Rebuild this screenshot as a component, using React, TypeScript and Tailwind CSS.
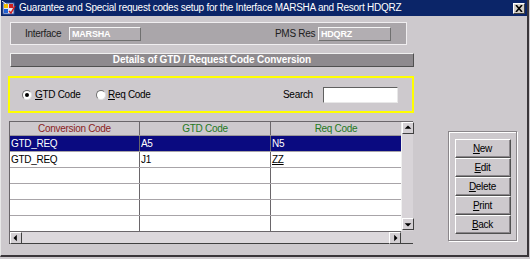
import React from 'react';

const font = "font-['Liberation_Sans',Arial,sans-serif]";

const rows = [
  { conv: 'GTD_REQ', gtd: 'A5', req: 'N5', selected: true },
  { conv: 'GTD_REQ', gtd: 'J1', req: 'ZZ', selected: false },
  { conv: '', gtd: '', req: '', selected: false },
  { conv: '', gtd: '', req: '', selected: false },
  { conv: '', gtd: '', req: '', selected: false },
  { conv: '', gtd: '', req: '', selected: false },
];

const Mnemonic: React.FC<{ text: string }> = ({ text }) => (
  <span className="whitespace-nowrap">
    <span className="underline">{text[0]}</span>
    {text.slice(1)}
  </span>
);

const Arrow: React.FC<{ dir: 'up' | 'down' | 'left' | 'right' }> = ({ dir }) => {
  const pts = {
    up: '2,7 6,3 10,7',
    down: '2,5 6,9 10,5',
    left: '7,2 3,6 7,10',
    right: '5,2 9,6 5,10',
  }[dir];
  return (
    <div className="w-[12px] h-[12px] bg-[#d4d0d4] border border-t-white border-l-white border-r-[#404040] border-b-[#404040] flex items-center justify-center">
      <svg width="10" height="10" viewBox="0 0 12 12">
        <polygon points={pts} fill="#000" />
      </svg>
    </div>
  );
};

const WinIcon = () => (
  <svg width="14" height="14" viewBox="0 0 14 14">
    <rect x="1" y="2" width="11" height="11" fill="#e8e8f0" stroke="#3050a0" strokeWidth="1" />
    <rect x="2" y="3" width="4" height="4" fill="#f0c000" />
    <rect x="7" y="3" width="4" height="4" fill="#d02020" />
    <rect x="2" y="8" width="4" height="4" fill="#2060d0" />
    <path d="M7 10 L9 12 L13 5" stroke="#d02020" strokeWidth="1.5" fill="none" />
    <path d="M0 0 L4 3" stroke="#ffffff" strokeWidth="1" />
  </svg>
);

export default function App() {
  return (
    <div className={`w-[530px] h-[259px] bg-[#cdc9cd] ${font} text-[10px] tracking-[-0.3px] text-black overflow-hidden`}>
      <div className="w-[529px] h-[257px] flex flex-col border-r-2 border-b-2 border-[#3a363a] border-l border-l-[#e8e8e8]">
        {/* title bar */}
        <div className="h-[16px] bg-[#0b2568] flex items-center pl-[1px] pr-[2px]">
          <WinIcon />
          <span className="ml-[3px] text-white text-[10px] tracking-[-0.25px] leading-none whitespace-nowrap">
            Guarantee and Special request codes setup for the Interface MARSHA and Resort HDQRZ
          </span>
          <div className="ml-auto w-[12px] h-[11px] bg-[#d4d0c8] border border-t-white border-l-white border-r-[#404040] border-b-[#404040] flex items-center justify-center">
            <svg width="8" height="7" viewBox="0 0 8 7">
              <path d="M1 0 L7 7 M7 0 L1 7" stroke="#000" strokeWidth="1.6" />
            </svg>
          </div>
        </div>

        {/* interface panel */}
        <div className="mt-[6px] ml-[9px] w-[397px] h-[23px] bg-[#aaa6aa] border border-[#f0eef0] flex items-center">
          <span className="ml-[14px] w-[44px] text-[#202020] whitespace-nowrap">Interface</span>
          <div className="w-[72px] h-[14px] bg-[#b2aeb2] border border-t-[#f4f4f4] border-l-[#f4f4f4] border-r-[#707070] border-b-[#707070] text-white font-bold text-[9px] tracking-[-0.2px] leading-[12px] pl-[2px]">
            MARSHA
          </div>
          <span className="ml-[134px] w-[43px] text-[#202020] whitespace-nowrap">PMS Res</span>
          <div className="w-[73px] h-[14px] bg-[#b2aeb2] border border-t-[#f4f4f4] border-l-[#f4f4f4] border-r-[#707070] border-b-[#707070] text-white font-bold text-[9px] tracking-[-0.2px] leading-[12px] pl-[2px]">
            HDQRZ
          </div>
        </div>

        {/* details header */}
        <div className="mt-[8px] ml-[9px] w-[404px] h-[14px] bg-[#8e8a8e] border border-t-[#f0f0f0] border-l-[#f0f0f0] border-r-[#505050] border-b-[#505050] text-white font-bold text-[10px] tracking-[-0.1px] leading-[12px] text-center whitespace-nowrap">
          Details of GTD / Request Code Conversion
        </div>

        {/* filter box */}
        <div className="mt-[9px] ml-[7px] w-[406px] h-[37px] border-2 border-[#ffff00] flex items-center">
          <div className="ml-[12px] w-[74px] flex items-center">
            <div className="w-[10px] h-[10px] rounded-full bg-white border border-t-[#707070] border-l-[#707070] border-r-[#e0e0e0] border-b-[#e0e0e0] flex items-center justify-center">
              <div className="w-[4px] h-[4px] rounded-full bg-black" />
            </div>
            <span className="ml-[3px]"><Mnemonic text="GTD Code" /></span>
          </div>
          <div className="w-[187px] flex items-center">
            <div className="w-[10px] h-[10px] rounded-full bg-white border border-t-[#707070] border-l-[#707070] border-r-[#e0e0e0] border-b-[#e0e0e0]" />
            <span className="ml-[2px]"><Mnemonic text="Req Code" /></span>
          </div>
          <span className="w-[40px] whitespace-nowrap">Search</span>
          <div className="w-[75px] h-[16px] bg-white border border-t-[#606060] border-l-[#606060] border-r-[#e8e8e8] border-b-[#e8e8e8]" />
        </div>

        {/* table + buttons */}
        <div className="mt-[8px] flex items-start">
          <div className="ml-[8px] w-[404px] border-t border-l border-[#6a666a] border-b border-b-[#404040]">
            <div className="flex h-[109px]">
              <div className="w-[391px] overflow-hidden">
                <div className="flex h-[14px] bg-[#cdc9cd] border-b border-[#9a969a]">
                  <div className="w-[130px] text-center text-[#8b2323] leading-[14px] border-r border-[#6a666a]">Conversion Code</div>
                  <div className="w-[131px] text-center text-[#1f7a1f] leading-[14px] border-r border-[#6a666a]">GTD Code</div>
                  <div className="w-[130px] text-center text-[#1f7a1f] leading-[14px]">Req Code</div>
                </div>
                {rows.map((r, i) => (
                  <div
                    key={i}
                    className={`flex h-[16px] border-b border-[#a8a4a8] ${r.selected ? 'bg-[#0a0a80] text-white' : 'bg-white text-black'}`}
                  >
                    <div className="w-[130px] pl-[1px] leading-[15px] border-r border-[#6a666a]">{r.conv}</div>
                    <div className="w-[131px] pl-[1px] leading-[15px] border-r border-[#6a666a]">{r.gtd}</div>
                    <div className={`w-[130px] pl-[1px] leading-[15px] ${r.req === 'ZZ' ? 'underline' : ''}`}>{r.req}</div>
                  </div>
                ))}
              </div>
              <div className="w-[12px] flex flex-col bg-[#d8d4d8] border-l border-[#f0f0f0]">
                <Arrow dir="up" />
                <div className="flex-1" />
                <div className="mb-[1px]">
                  <Arrow dir="down" />
                </div>
              </div>
            </div>
            <div className="flex h-[12px]">
              <div className="w-[391px] flex bg-[#dcd8dc] border-t border-[#6a666a]">
                <Arrow dir="left" />
                <div className="flex-1" />
                <Arrow dir="right" />
              </div>
              <div className="w-[12px] bg-[#cdc9cd]" />
            </div>
          </div>

          <div className="ml-[35px] mt-[10px] w-[69px] h-[110px] border border-[#8a868a] shadow-[inset_1px_1px_0_#ffffff,1px_1px_0_#ffffff] pt-[7px] flex flex-col items-center">
            {['New', 'Edit', 'Delete', 'Print', 'Back'].map((b) => (
              <div
                key={b}
                className="w-[56px] h-[19px] bg-[#cdc9cd] border border-t-white border-l-white border-r-[#505050] border-b-[#505050] shadow-[inset_-1px_-1px_0_#8a868a] flex items-center justify-center"
              >
                <Mnemonic text={b} />
              </div>
            ))}
          </div>
        </div>
      </div>
    </div>
  );
}
